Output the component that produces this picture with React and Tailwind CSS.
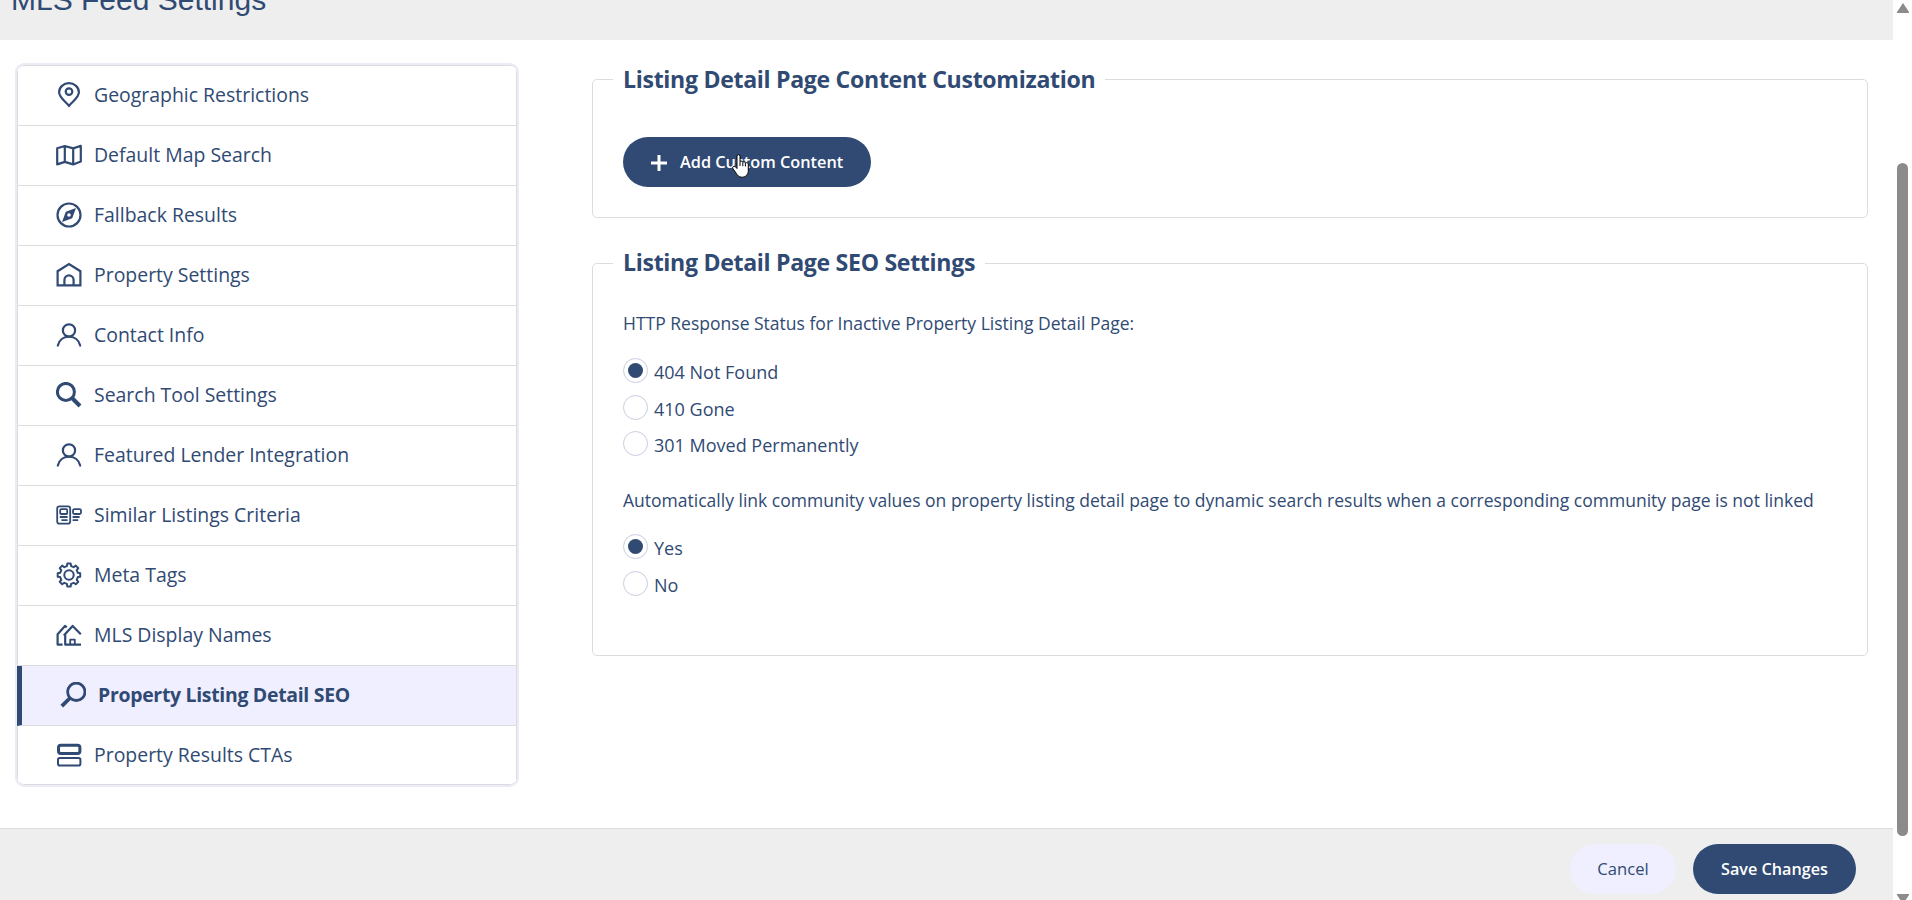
import clsx from 'clsx';

function PinIcon() {
  return (
    <svg className="-mt-px" width="26" height="26" viewBox="0 0 26 26" fill="none" stroke="currentColor" strokeWidth="2.2" strokeLinejoin="round">
      <path d="M13 24C10.5 20 3.1 16 3.1 10.3a9.9 9.1 0 0 1 19.8 0C22.9 16 15.5 20 13 24z" />
      <circle cx="13" cy="9.6" r="3.3" />
    </svg>
  );
}

function MapIcon() {
  return (
    <svg className="-mt-px" width="26" height="26" viewBox="0 0 26 26" fill="none" stroke="currentColor" strokeWidth="2.2" strokeLinejoin="round">
      <path d="M1.2 6.2 8.8 4l8.4 2.4L24.8 3.8v15.6l-7.6 3-8.4-2.5L1.2 22.4zM8.8 4v15.9M17.2 6.4v16" />
    </svg>
  );
}

function CompassIcon() {
  return (
    <svg className="-mt-px" width="26" height="26" viewBox="0 0 26 26" fill="none" stroke="currentColor" strokeWidth="2.2">
      <circle cx="13" cy="13" r="11.5" />
      <path
        d="M20 6 16.2 16.2 6 20 9.8 9.8zM13 11.2a1.8 1.8 0 1 0 0 3.6 1.8 1.8 0 0 0 0-3.6z"
        fill="currentColor"
        fillRule="evenodd"
        stroke="none"
      />
    </svg>
  );
}

function HomeIcon() {
  return (
    <svg className="-mt-px" width="26" height="26" viewBox="0 0 26 26" fill="none" stroke="currentColor" strokeWidth="2.2">
      <path d="M1.6 23.4V9.2L13 2l11.4 7.2v14.2z" />
      <path d="M8.4 23.4V18a4.6 4.6 0 0 1 9.2 0v5.4" />
    </svg>
  );
}

function UserIcon() {
  return (
    <svg className="-mt-px" width="26" height="26" viewBox="0 0 26 26" fill="none" stroke="currentColor" strokeWidth="2.2" strokeLinecap="round">
      <circle cx="13" cy="8.4" r="6.1" />
      <path d="M1.8 23.6C3 18 7.5 14.7 13 14.7S23 18 24.2 23.6" />
    </svg>
  );
}

function SearchIcon() {
  return (
    <svg className="-mt-px" width="26" height="26" viewBox="0 0 26 26" fill="none" stroke="currentColor" strokeWidth="3">
      <circle cx="9.9" cy="9.9" r="8.5" />
      <path d="M16 16 24 24" strokeWidth="4" />
    </svg>
  );
}

function SearchFlippedIcon() {
  return (
    <svg className="-mt-px" width="26" height="26" viewBox="0 0 26 26" fill="none" stroke="currentColor" strokeWidth="2.8">
      <circle cx="16.3" cy="9.8" r="8.7" />
      <path d="M10 16 1.8 24.2" strokeWidth="3.8" />
    </svg>
  );
}

function ListingsIcon() {
  return (
    <svg className="-mt-px" width="26" height="26" viewBox="0 0 26 26" fill="none" stroke="currentColor" strokeWidth="1.8">
      <rect x="1.2" y="4.4" width="13" height="17.2" rx="2.2" />
      <rect x="4.2" y="7.2" width="7" height="4.8" rx="1" />
      <rect x="17" y="7.2" width="8" height="4.8" rx="1.4" />
      <path d="M3.8 15h7.8M5.4 18.2h6.2M16.6 15h7M16.6 18.2h5.6" />
    </svg>
  );
}

function GearIcon() {
  return (
    <svg className="-mt-px" width="26" height="26" viewBox="0 0 26 26" fill="none" stroke="currentColor" strokeWidth="2" strokeLinejoin="round">
      <path d="M10.9 4.1 11.3 1.6h3.4l.4 2.5 2.6 1.1 2.1-1.6 2.5 2.5-1.6 2.1 1.1 2.6 2.4.5v3.4l-2.4.4-1.1 2.7 1.6 2.1-2.5 2.4-2.1-1.5-2.6 1.1-.4 2.5h-3.4l-.4-2.5-2.6-1.1-2.1 1.5-2.5-2.4 1.6-2.1-1.1-2.7-2.5-.4v-3.4l2.5-.5 1.1-2.6-1.6-2.1 2.5-2.5 2.1 1.6z" />
      <circle cx="13" cy="13" r="4.7" />
    </svg>
  );
}

function HousesIcon() {
  return (
    <svg className="-mt-px" width="26" height="26" viewBox="0 0 26 26" fill="none" stroke="currentColor" strokeWidth="2.2" strokeLinejoin="round">
      <path d="M6.6 22.6H1.6V12.2L9 3.9l1.7 1.5" />
      <path d="M25 22.6H9.2V12.2M7.8 13.4 16.6 3.9l8.2 8.4" />
      <path d="M14.2 22.6v-5h4.6v5" strokeWidth="1.8" />
    </svg>
  );
}

function RowsIcon() {
  return (
    <svg className="-mt-[2px]" width="26" height="26" viewBox="0 0 26 26" fill="none" stroke="currentColor">
      <rect x="2.5" y="3.3" width="21.4" height="8.2" rx="2.4" strokeWidth="3" />
      <rect x="2" y="16" width="22.4" height="7.6" rx="1.8" strokeWidth="2" />
    </svg>
  );
}

function HandCursor() {
  return (
    <svg width="17" height="24" viewBox="0 0 17 24" fill="white" stroke="black" strokeWidth="1" strokeLinejoin="round">
      <path d="M5 14.5V2.2a1.5 1.5 0 0 1 3 0v5.4c.8-.8 2.4-.6 2.8.5.8-.6 2.3-.4 2.6.7 1-.5 2.9 0 2.9 1.4v7.2c0 2.6-2.6 5.8-5.3 5.8H9.6c-2.4 0-4.2-1.8-5.3-3.8L.9 14.6c-.9-1.5.8-2.9 2.1-2.2z" />
      <path d="M8 7.6v4.4M10.8 8.3v3.9M13.4 9.1v3.3" fill="none" />
    </svg>
  );
}

const menu = [
  { label: 'Geographic Restrictions', icon: PinIcon },
  { label: 'Default Map Search', icon: MapIcon },
  { label: 'Fallback Results', icon: CompassIcon },
  { label: 'Property Settings', icon: HomeIcon },
  { label: 'Contact Info', icon: UserIcon },
  { label: 'Search Tool Settings', icon: SearchIcon },
  { label: 'Featured Lender Integration', icon: UserIcon },
  { label: 'Similar Listings Criteria', icon: ListingsIcon },
  { label: 'Meta Tags', icon: GearIcon },
  { label: 'MLS Display Names', icon: HousesIcon },
  { label: 'Property Listing Detail SEO', icon: SearchFlippedIcon, active: true },
  { label: 'Property Results CTAs', icon: RowsIcon },
];

function Sidebar() {
  return (
    <nav className="w-[504px] h-[724px] shrink-0 rounded-[9px] border-2 border-[#ebebf7] bg-white overflow-hidden">
      <ul className="h-full border-y border-[#dcdcdf] rounded-[7px] overflow-hidden">
        {menu.map(({ label, icon: Icon, active }) => (
          <li
            key={label}
            className={clsx(
              'flex items-center h-[60px] gap-3 border-b border-r border-[#dcdcdf] pl-[38px] text-[19.45px] last:border-b-0',
              active ? 'border-l-[5px] border-l-[#304a73] bg-[#efefff] font-bold tracking-[-0.3px]' : 'border-l font-medium'
            )}
          >
            <Icon />
            <span className="pb-[2px]">{label}</span>
          </li>
        ))}
      </ul>
    </nav>
  );
}

function Panel({ title, className, children }) {
  return (
    <fieldset className={clsx('border border-[#dcdcdf] rounded-[5px] pl-[30px]', className)}>
      <legend className="-ml-[10px] px-[10px] h-8 leading-[31px] text-[23.1px] font-bold tracking-[-0.31px]">{title}</legend>
      {children}
    </fieldset>
  );
}

function RadioOption({ label, checked }) {
  return (
    <label className="flex h-[36.5px] gap-[6px] text-[18px] font-medium leading-7">
      <span className="flex items-center justify-center size-[25px] rounded-full border border-[#c9cde0]">
        {checked && <span className="size-[15px] rounded-full bg-[#304a73]"></span>}
      </span>
      <span>{label}</span>
    </label>
  );
}

function Scrollbar() {
  return (
    <div className="w-[19px] h-full shrink-0 bg-white flex flex-col items-center overflow-hidden">
      <svg className="mt-[3px] shrink-0" width="12" height="10" viewBox="0 0 12 10" fill="#8b8b8b">
        <path d="M6 0 12 9v1H0V9z" />
      </svg>
      <div className="mt-[150px] w-[11px] h-[673px] shrink-0 rounded-full bg-[#8b8b8b]"></div>
      <svg className="mt-[58px] shrink-0" width="12" height="10" viewBox="0 0 12 10" fill="#8b8b8b">
        <path d="M0 0h12v1L6 10 0 1z" />
      </svg>
    </div>
  );
}

export default function App() {
  return (
    <div className="flex w-[1912px] h-[900px] overflow-hidden bg-white text-[#304a73] font-['Open_Sans',sans-serif]">
      <div className="flex flex-col flex-1">
        <header className="h-10 shrink-0 bg-[#eeeeee] pl-[11px] overflow-hidden">
          <h1 className="-mt-5 text-[30px] leading-10 font-['Liberation_Sans',sans-serif]">MLS Feed Settings</h1>
        </header>

        <main className="flex flex-1 pt-[23px] pl-[15px]">
          <Sidebar />
          <div className="ml-[73px] w-[1276px]">
            <Panel title="Listing Detail Page Content Customization" className="h-[155px] [&>legend]:leading-[33px]">
              <button className="relative mt-[42px] flex items-center w-[248px] h-[50px] rounded-full bg-[#304a73] pl-[28px] text-[16.3px] font-semibold text-white">
                <svg className="mt-[2px]" width="16" height="16" viewBox="0 0 16 16" stroke="white" strokeWidth="3">
                  <path d="M8 0v16M0 8h16" />
                </svg>
                <span className="ml-[13px]">Add Custom Content</span>
                <span className="absolute left-[109px] top-[17px]">
                  <HandCursor />
                </span>
              </button>
            </Panel>

            <Panel title="Listing Detail Page SEO Settings" className="mt-[29px] h-[409px]">
              <p className="mt-[30px] text-[17.52px] leading-7">HTTP Response Status for Inactive Property Listing Detail Page:</p>
              <div className="mt-[21px]">
                <RadioOption label="404 Not Found" checked />
                <RadioOption label="410 Gone" />
                <RadioOption label="301 Moved Permanently" />
              </div>
              <p className="mt-[18px] text-[17.52px] leading-7">
                Automatically link community values on property listing detail page to dynamic search results when a corresponding community page is not linked
              </p>
              <div className="mt-[20.5px]">
                <RadioOption label="Yes" checked />
                <RadioOption label="No" />
              </div>
            </Panel>
          </div>
        </main>

        <footer className="flex h-[72px] shrink-0 justify-end gap-[17px] border-t border-[#dcdcdf] bg-[#eeeeee] pt-[15px] pr-[37px] text-[16.2px]">
          <button className="w-[106px] h-[50px] rounded-full bg-[#efefff] text-[16.6px] font-medium">Cancel</button>
          <button className="w-[163px] h-[50px] rounded-full bg-[#304a73] font-semibold text-white">Save Changes</button>
        </footer>
      </div>
      <Scrollbar />
    </div>
  );
}
